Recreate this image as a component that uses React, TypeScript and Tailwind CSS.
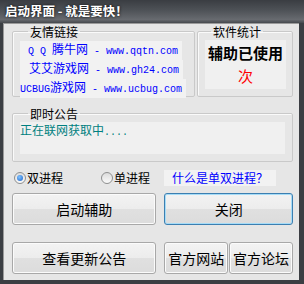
const links = [
  { pad: "pl-[8px]", pre: "Q Q ", name: "腾牛网", url: "www.qqtn.com" },
  { pad: "pl-[9px]", pre: "", name: "艾艾游戏网", url: "www.gh24.com" },
  { pad: "pl-0", pre: "UCBUG", name: "游戏网", url: "www.ucbug.com" },
];

function Mono({ children }: { children: React.ReactNode }) {
  return <span className="font-['Liberation_Mono',monospace] text-[10px]">{children}</span>;
}

function Btn({
  children,
  className = "",
  focused = false,
}: {
  children: React.ReactNode;
  className?: string;
  focused?: boolean;
}) {
  return (
    <button
      className={
        "flex h-[32px] items-center justify-center rounded-[3px] border bg-[linear-gradient(#f3f3f3_0%,#ececec_50%,#e0e0e0_51%,#dcdcdc_100%)] text-[14px] text-black " +
        (focused
          ? "border-[#3c7fb1] shadow-[inset_0_0_0_1px_#a6dcf7] "
          : "border-[#a8a8a8] shadow-[inset_0_0_0_1px_#fbfbfb] ") +
        className
      }
    >
      {children}
    </button>
  );
}

function Radio({ checked, label }: { checked?: boolean; label: string }) {
  return (
    <label className="flex items-center gap-[1px]">
      <span className="flex h-[12px] w-[12px] items-center justify-center rounded-full border border-[#8e8f8f] bg-[linear-gradient(#dcdcdc,#fafafa)]">
        {checked && (
          <span className="h-[6px] w-[6px] rounded-full bg-[radial-gradient(circle_at_40%_35%,#7ec3ff,#1f62c9)]" />
        )}
      </span>
      <span className="text-[12px] leading-[16px] text-black">{label}</span>
    </label>
  );
}

export default function App() {
  return (
    <div className="flex h-[284px] w-[304px] flex-col bg-[#3b3e43] pb-[4px] pl-[3px] pr-[5px] font-['Noto_Sans_CJK_SC','Liberation_Sans',sans-serif] select-none">
      {/* 标题栏 */}
      <div className="-ml-[3px] -mr-[5px] flex h-[23px] items-center bg-[linear-gradient(#3a3d42,#4e5257_45%,#676a6f_85%,#45484d)] pl-[5px]">
        <span className="text-[12.5px] font-bold leading-none text-white [text-shadow:0_0_3px_#000]">
          启动界面 - 就是要快！
        </span>
      </div>

      <div className="flex flex-1 flex-col border-l border-t border-[#9a9a9a] bg-[#e6e6e6] pl-[8px] pr-[6px] pt-[1px]">
        <div className="flex gap-[2px]">
          <fieldset className="h-[72px] w-[183px] rounded-[2px] border border-[#c9c9c9] pl-[7px] shadow-[inset_1px_1px_0_#fafafa]">
            <legend className="ml-[8px] px-[2px] text-[12px] leading-[13px] text-black">友情链接</legend>
            <div className="flex flex-col items-start pt-[3px] text-[12px] leading-[16px] text-[#0000ff]">
              {links.map((l) => (
                <span key={l.url} className={"whitespace-pre bg-[#f2f2f2] pr-[4px] " + l.pad}>
                  {l.pre && <Mono>{l.pre}</Mono>}
                  {l.name}
                  <Mono>{" - " + l.url}</Mono>
                </span>
              ))}
            </div>
          </fieldset>

          <fieldset className="h-[72px] w-[96px] rounded-[2px] border border-[#c9c9c9] pl-[7px] shadow-[inset_1px_1px_0_#fafafa]">
            <legend className="ml-[6px] px-[2px] text-[12px] leading-[13px] text-black">软件统计</legend>
            <div className="mt-[2px] flex h-[49px] w-[81px] flex-col items-center bg-[#f0f0f0] pt-[4px]">
              <span className="text-[15px] font-bold leading-[18px] text-black">辅助已使用</span>
              <span className="mt-[6px] text-[15px] leading-[16px] text-[#ff0000]">次</span>
            </div>
          </fieldset>
        </div>

        <fieldset className="mt-[10px] h-[55px] w-[281px] rounded-[2px] border border-[#c9c9c9] pl-[7px] shadow-[inset_1px_1px_0_#fafafa]">
          <legend className="ml-[8px] px-[2px] text-[12px] leading-[13px] text-black">即时公告</legend>
          <div className="mt-[2px] h-[32px] w-[265px] bg-[#f0f0f0] pt-[1px] text-[12px] leading-[13px] text-[#008080]">
            正在联网获取中<Mono>....</Mono>
          </div>
        </fieldset>

        <div className="mt-[8px] flex h-[16px] items-center">
          <div className="ml-[2px] w-[87px]">
            <Radio checked label="双进程" />
          </div>
          <Radio label="单进程" />
          <span className="ml-[14px] w-[112px] bg-[#f2f2f2] pl-[8px] text-[12px] leading-[16px] text-[#0000ff]">
            什么是单双进程？
          </span>
        </div>

        <div className="mt-[7px] flex gap-[8px]">
          <Btn className="w-[145px]">启动辅助</Btn>
          <Btn focused className="w-[129px]">关闭</Btn>
        </div>

        <div className="mt-[17px] flex">
          <Btn className="w-[145px]">查看更新公告</Btn>
          <Btn className="ml-[8px] w-[64px]">官方网站</Btn>
          <Btn className="ml-[1px] w-[64px]">官方论坛</Btn>
        </div>
      </div>
    </div>
  );
}
